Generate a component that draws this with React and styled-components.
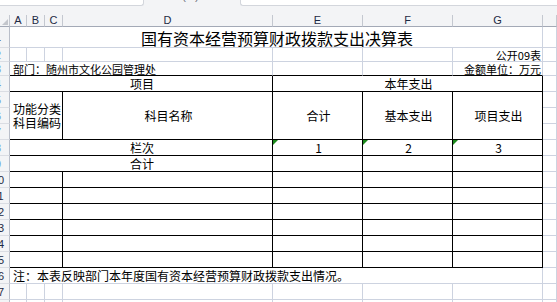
import React from "react";
import styled, { createGlobalStyle } from "styled-components";

const INK = "#000";
const GRID = "#cdd3e0";

const GlobalStyle = createGlobalStyle`
  html, body {
    margin: 0;
    padding: 0;
    background: #fff;
    overflow: hidden;
  }
`;

const Page = styled.div`
  width: 557px;
  height: 302px;
  overflow: hidden;
  background: #fff;
`;

// formula bar, only its bottom edge is in the picture
const Strip = styled.div`
  height: 15px;
  display: flex;
  align-items: flex-start;
  background: #f3f4f6;
  overflow: hidden;
`;

const NameBox = styled.div`
  width: 143px;
  height: 5px;
  background: #fff;
  border: 1px solid #d3d6dc;
  border-top: none;
  border-left: none;
  border-radius: 0 0 3px 0;
`;

const FxArea = styled.div`
  width: 96px;
  display: flex;
  justify-content: center;
  font-family: "Liberation Sans", sans-serif;
  font-size: 11px;
  line-height: 11px;
  color: #6a6f78;
  margin-top: -9px;
  letter-spacing: 3px;
`;

const InputBox = styled.div`
  flex: 1;
  height: 5px;
  background: #fff;
  border: 1px solid #d3d6dc;
  border-top: none;
  border-right: none;
  border-radius: 0 0 0 3px;
`;

const Sheet = styled.div`
  display: grid;
  grid-template-columns: 10px 17px 18px 18px 210px 90px 90px 90px 1fr;
  grid-template-rows: 12px 21px 14px 14px repeat(15, 16px);
  font-family: "Noto Sans CJK SC", "Liberation Sans", sans-serif;
  color: #000;
`;

const Corner = styled.div`
  grid-column: 1;
  grid-row: 1;
  position: relative;
  background: #f3f4f6;
  border-right: 1px solid #c4c8d0;
  border-bottom: 1px solid #a3a9b6;
  &::after {
    content: "";
    position: absolute;
    right: 1px;
    bottom: 1px;
    border-left: 6px solid transparent;
    border-bottom: 6px solid #c3c6cc;
  }
`;

const ColHead = styled.div`
  grid-row: 1;
  grid-column: ${(p) => p.$col};
  display: flex;
  align-items: flex-end;
  justify-content: center;
  background: #f3f4f6;
  border-right: 1px solid #c4c8d0;
  border-bottom: 1px solid #a3a9b6;
  font-family: "Liberation Sans", sans-serif;
  font-size: 11px;
  line-height: 11px;
  color: #1e2a44;
  overflow: hidden;
`;

const RowHead = styled.div`
  grid-column: 1;
  grid-row: ${(p) => p.$row};
  display: flex;
  align-items: center;
  justify-content: flex-end;
  overflow: hidden;
  background: #f3f4f6;
  border-right: 1px solid #b9bec9;
  border-bottom: 1px solid #dadde3;
`;

const RowNum = styled.span`
  flex: 0 0 22px;
  text-align: center;
  font-family: "Liberation Sans", sans-serif;
  font-size: 11px;
  line-height: 12px;
  color: ${(p) => (p.$hi ? "#6f9fd6" : "#1e2a44")};
`;

const Cell = styled.div`
  grid-column: ${(p) => p.$col};
  grid-row: ${(p) => p.$row};
  position: relative;
  display: flex;
  align-items: ${(p) => (p.$mid ? "center" : "flex-end")};
  justify-content: ${(p) =>
    p.$h === "left" ? "flex-start" : p.$h === "right" ? "flex-end" : "center"};
  padding: 0 1px 0 3px;
  border-right: 1px solid ${(p) => (p.$inkR ? INK : GRID)};
  border-bottom: 1px solid ${(p) => (p.$inkB ? INK : GRID)};
  font-size: ${(p) => p.$size || 12}px;
  line-height: ${(p) => (p.$size === 11 ? 12 : (p.$size || 12) + 2)}px;
  white-space: nowrap;
  min-width: 0;
  ${(p) =>
    p.$flag &&
    `
    &::before {
      content: "";
      position: absolute;
      left: 0;
      top: 0;
      border-top: 5px solid #1c8a1c;
      border-right: 5px solid transparent;
    }
  `}
`;

const Lines = styled.span`
  display: block;
  width: 49px;
  white-space: normal;
  word-break: break-all;
  line-height: 14px;
`;

const letters = ["A", "B", "C", "D", "E", "F", "G", ""];

// grid columns: 1 = row header, 2..8 = A..G, 9 = H
const App = () => {
  const rows = Array.from({ length: 18 }, (_, i) => i + 1);
  const box = { $inkR: true, $inkB: true };

  return (
    <Page>
      <GlobalStyle />
      <Strip>
        <NameBox />
        <FxArea>( )</FxArea>
        <InputBox />
      </Strip>
      <Sheet>
        <Corner />
        {letters.map((l, i) => (
          <ColHead key={i} $col={i + 2}>
            {l}
          </ColHead>
        ))}

        {rows.map((r) => (
          <RowHead key={r} $row={r + 1}>
            <RowNum $hi={r >= 2 && r <= 9}>{r}</RowNum>
          </RowHead>
        ))}

        {/* row 1: title */}
        <Cell $col="2 / 9" $row="2" $size={16}>
          国有资本经营预算财政拨款支出决算表
        </Cell>
        <Cell $col="9" $row="2" />

        {/* row 2 */}
        <Cell $col="2" $row="3" />
        <Cell $col="3" $row="3" />
        <Cell $col="4" $row="3" />
        <Cell $col="5" $row="3" />
        <Cell $col="6" $row="3" />
        <Cell $col="7" $row="3" />
        <Cell $col="8" $row="3" $h="right" $size={11}>
          公开09表
        </Cell>
        <Cell $col="9" $row="3" />

        {/* row 3 */}
        <Cell $col="2 / 6" $row="4" $h="left" $size={11} $inkB>
          部门：随州市文化公园管理处
        </Cell>
        <Cell $col="6" $row="4" $inkB />
        <Cell $col="7" $row="4" $inkB />
        <Cell $col="8" $row="4" $h="right" $size={11} $inkB>
          金额单位：万元
        </Cell>
        <Cell $col="9" $row="4" />

        {/* row 4 */}
        <Cell $col="2 / 6" $row="5" {...box}>
          项目
        </Cell>
        <Cell $col="6 / 9" $row="5" {...box}>
          本年支出
        </Cell>
        <Cell $col="9" $row="5" />

        {/* rows 5-7 */}
        <Cell $col="2 / 5" $row="6 / 9" $h="left" $mid {...box}>
          <Lines>功能分类科目编码</Lines>
        </Cell>
        <Cell $col="5" $row="6 / 9" $mid {...box}>
          科目名称
        </Cell>
        <Cell $col="6" $row="6 / 9" $mid {...box}>
          合计
        </Cell>
        <Cell $col="7" $row="6 / 9" $mid {...box}>
          基本支出
        </Cell>
        <Cell $col="8" $row="6 / 9" $mid {...box}>
          项目支出
        </Cell>
        <Cell $col="9" $row="6" />
        <Cell $col="9" $row="7" />
        <Cell $col="9" $row="8" />

        {/* row 8 */}
        <Cell $col="2 / 6" $row="9" {...box}>
          栏次
        </Cell>
        <Cell $col="6" $row="9" $flag {...box}>
          1
        </Cell>
        <Cell $col="7" $row="9" $flag {...box}>
          2
        </Cell>
        <Cell $col="8" $row="9" $flag {...box}>
          3
        </Cell>
        <Cell $col="9" $row="9" />

        {/* row 9 */}
        <Cell $col="2 / 6" $row="10" {...box}>
          合计
        </Cell>
        <Cell $col="6" $row="10" {...box} />
        <Cell $col="7" $row="10" {...box} />
        <Cell $col="8" $row="10" {...box} />
        <Cell $col="9" $row="10" />

        {/* rows 10-15 */}
        {[11, 12, 13, 14, 15, 16].map((r) => (
          <React.Fragment key={r}>
            <Cell $col="2 / 5" $row={r} {...box} />
            <Cell $col="5" $row={r} {...box} />
            <Cell $col="6" $row={r} {...box} />
            <Cell $col="7" $row={r} {...box} />
            <Cell $col="8" $row={r} {...box} />
            <Cell $col="9" $row={r} />
          </React.Fragment>
        ))}

        {/* row 16: note */}
        <Cell $col="2 / 9" $row="17" $h="left">
          注：本表反映部门本年度国有资本经营预算财政拨款支出情况。
        </Cell>
        <Cell $col="9" $row="17" />

        {/* rows 17-18 */}
        {[18, 19].map((r) => (
          <React.Fragment key={r}>
            {[2, 3, 4, 5, 6, 7, 8, 9].map((c) => (
              <Cell key={c} $col={c} $row={r} />
            ))}
          </React.Fragment>
        ))}
      </Sheet>
    </Page>
  );
};

export default App;
